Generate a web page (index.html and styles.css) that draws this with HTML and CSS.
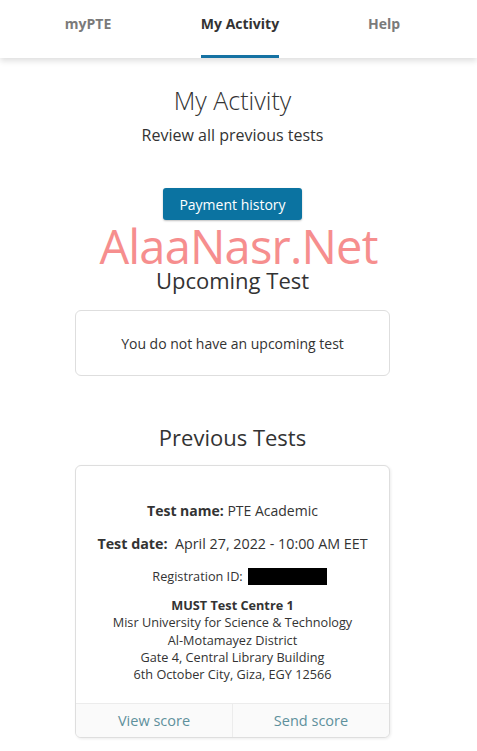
FILE: index.html
```html
<!DOCTYPE html>
<html lang="en">
<head>
<meta charset="utf-8">
<title>My Activity</title>
<link rel="stylesheet" href="styles.css">
</head>
<body>
<nav class="topnav">
  <a class="navitem"><span class="navlabel">myPTE</span></a>
  <a class="navitem active"><span class="navlabel">My Activity</span></a>
  <a class="navitem"><span class="navlabel">Help</span></a>
</nav>
<main class="content">
  <h1 class="title">My Activity</h1>
  <p class="subtitle">Review all previous tests</p>
  <div class="btnwrap"><button class="btn-primary">Payment history</button></div>
  <div class="watermark">AlaaNasr.Net</div>
  <h2 class="section">Upcoming Test</h2>
  <div class="card card-empty">You do not have an upcoming test</div>
  <h2 class="section section-prev">Previous Tests</h2>
  <div class="card card-test">
    <p class="row name"><b>Test name:</b> PTE Academic</p>
    <p class="row date"><b>Test date:</b>&nbsp; April 27, 2022 - 10:00 AM EET</p>
    <p class="row reg">Registration ID: <span class="redact"></span></p>
    <div class="address">
      <b>MUST Test Centre 1</b><br>
      Misr University for Science &amp; Technology<br>
      Al-Motamayez District<br>
      Gate 4, Central Library Building<br>
      6th October City, Giza, EGY 12566
    </div>
    <div class="actions">
      <a class="action">View score</a>
      <a class="action">Send score</a>
    </div>
  </div>
</main>
</body>
</html>
```
FILE: styles.css
```css
* { box-sizing: border-box; }
html, body { margin: 0; padding: 0; background: #fff; }
body {
  font-family: "Open Sans", "DejaVu Sans", sans-serif;
  color: #333;
  width: 477px;
  height: 751px;
  overflow: hidden;
}
.topnav {
  display: grid;
  grid-template-columns: 176px 128px 160px;
  height: 58px;
  background: #fff;
  box-shadow: 0 3px 6px rgba(0,0,0,0.13);
  position: relative;
  z-index: 1;
}
.navitem {
  display: flex;
  justify-content: center;
  font-size: 14px;
  font-weight: 700;
  color: #7a7a7a;
}
.navlabel {
  display: block;
  height: 58px;
  padding-top: 14px;
  line-height: 20px;
}
.navitem.active { color: #333; }
.navitem.active .navlabel { border-bottom: 3px solid #1572a3; }
.content {
  width: 315px;
  margin-left: 75px;
  position: relative;
  text-align: center;
}
.title {
  margin: 26px 0 0;
  font-size: 25px;
  line-height: 32px;
  font-weight: 300;
  color: #333;
}
.subtitle {
  margin: 9px 0 0;
  font-size: 16px;
  line-height: 20px;
}
.btnwrap { margin-top: 43px; }
.btn-primary {
  font-family: inherit;
  width: 139px;
  height: 32px;
  border: 0;
  border-radius: 3px;
  background: #0b73a1;
  color: #fff;
  font-size: 14px;
  box-shadow: 0 1px 2px rgba(0,0,0,0.25);
  padding: 0;
}
.watermark {
  position: absolute;
  left: 0;
  right: -12px;
  top: 142px;
  font-size: 47px;
  line-height: 40px;
  color: #f68e8e;
  text-align: center;
  letter-spacing: -0.8px;
  pointer-events: none;
}
.section {
  margin: 45px 0 0;
  font-size: 22px;
  line-height: 30px;
  font-weight: 400;
}
.section-prev { margin-top: 46px; }
.card {
  border: 1px solid #dedede;
  border-radius: 6px;
  background: #fff;
  margin-top: 15px;
}
.card-empty {
  height: 66px;
  display: flex;
  align-items: center;
  justify-content: center;
  font-size: 14px;
}
.card-test {
  margin-top: 13px;
  padding-top: 35px;
  box-shadow: 1px 1px 3px rgba(0,0,0,0.08);
  overflow: hidden;
}
.row { margin: 0; }
.name { font-size: 14px; line-height: 20px; }
.date { margin-top: 13px; font-size: 14.3px; line-height: 20px; }
.reg {
  margin-top: 13px;
  padding-left: 14px;
  font-size: 12.7px;
  line-height: 18px;
  display: flex;
  justify-content: center;
  align-items: center;
  gap: 5px;
}
.redact {
  display: inline-block;
  width: 79px;
  height: 17px;
  background: #000;
}
.address {
  margin-top: 12px;
  font-size: 12.7px;
  line-height: 17.3px;
}
.actions {
  margin-top: 20px;
  display: grid;
  grid-template-columns: 156px 1fr;
  height: 34px;
  border-top: 1px solid #ececec;
  background: #fafafa;
}
.action {
  display: flex;
  align-items: center;
  justify-content: center;
  font-size: 14.5px;
  color: #5e909c;
}
.action + .action { border-left: 1px solid #ececec; }
```
